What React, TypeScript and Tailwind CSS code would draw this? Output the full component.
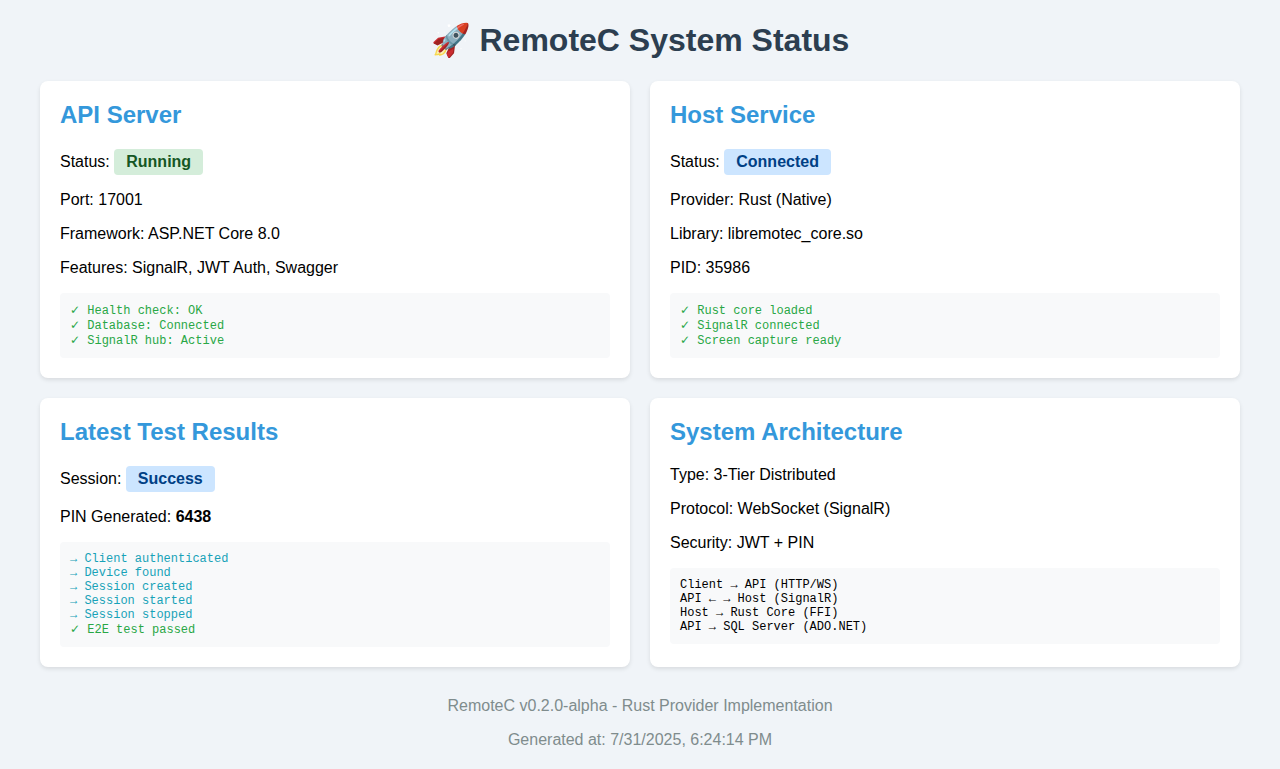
import type { ReactNode } from "react";

function Card({ title, children }: { title: string; children: ReactNode }) {
  return (
    <section className="rounded-lg bg-white p-5 shadow-[0_2px_4px_rgba(0,0,0,0.1)]">
      <h2 className="mb-5 text-2xl leading-7 font-bold text-[#3498db]">{title}</h2>
      {children}
    </section>
  );
}

function Row({ children }: { children: ReactNode }) {
  return <p className="my-4 leading-[18px]">{children}</p>;
}

function Badge({ tone, children }: { tone: "green" | "blue"; children: ReactNode }) {
  const colors = tone === "green" ? "bg-[#d4edda] text-[#155724]" : "bg-[#cce5ff] text-[#004085]";
  return <span className={`inline-block rounded-sm px-3 py-1 font-bold ${colors}`}>{children}</span>;
}

function Log({ children }: { children: ReactNode }) {
  return (
    <div className="mt-2 rounded-sm bg-[#f8f9fa] p-2.5 font-['Liberation_Mono','DejaVu_Sans',monospace] text-xs leading-[normal]">
      {children}
    </div>
  );
}

const ok = "text-[#28a745]";
const info = "text-[#17a2b8]";

export default function App() {
  return (
    <main className="min-h-screen bg-[#f0f4f8] px-5 pt-5 pb-1 font-['Liberation_Sans',sans-serif] text-base text-black">
      <div className="mx-auto max-w-[1200px]">
        <h1 className="mb-5 text-center text-[32px] leading-[41px] font-bold text-[#2c3e50]">🚀 RemoteC System Status</h1>
        <div className="grid grid-cols-2 gap-5">
          <Card title="API Server">
            <Row>Status: <Badge tone="green">Running</Badge></Row>
            <Row>Port: 17001</Row>
            <Row>Framework: ASP.NET Core 8.0</Row>
            <Row>Features: SignalR, JWT Auth, Swagger</Row>
            <Log>
              <div className={ok}>✓ Health check: OK</div>
              <div className={ok}>✓ Database: Connected</div>
              <div className={ok}>✓ SignalR hub: Active</div>
            </Log>
          </Card>
          <Card title="Host Service">
            <Row>Status: <Badge tone="blue">Connected</Badge></Row>
            <Row>Provider: Rust (Native)</Row>
            <Row>Library: libremotec_core.so</Row>
            <Row>PID: 35986</Row>
            <Log>
              <div className={ok}>✓ Rust core loaded</div>
              <div className={ok}>✓ SignalR connected</div>
              <div className={ok}>✓ Screen capture ready</div>
            </Log>
          </Card>
          <Card title="Latest Test Results">
            <Row>Session: <Badge tone="blue">Success</Badge></Row>
            <Row>PIN Generated: <strong>6438</strong></Row>
            <Log>
              <div className={info}>→ Client authenticated</div>
              <div className={info}>→ Device found</div>
              <div className={info}>→ Session created</div>
              <div className={info}>→ Session started</div>
              <div className={info}>→ Session stopped</div>
              <div className={ok}>✓ E2E test passed</div>
            </Log>
          </Card>
          <Card title="System Architecture">
            <Row>Type: 3-Tier Distributed</Row>
            <Row>Protocol: WebSocket (SignalR)</Row>
            <Row>Security: JWT + PIN</Row>
            <Log>
              <div>Client → API (HTTP/WS)</div>
              <div>API ← → Host (SignalR)</div>
              <div>Host → Rust Core (FFI)</div>
              <div>API → SQL Server (ADO.NET)</div>
            </Log>
          </Card>
        </div>
        <footer className="mt-[30px] text-center text-[#7f8c8d]">
          <Row>RemoteC v0.2.0-alpha - Rust Provider Implementation</Row>
          <Row>Generated at: 7/31/2025, 6:24:14 PM</Row>
        </footer>
      </div>
    </main>
  );
}
